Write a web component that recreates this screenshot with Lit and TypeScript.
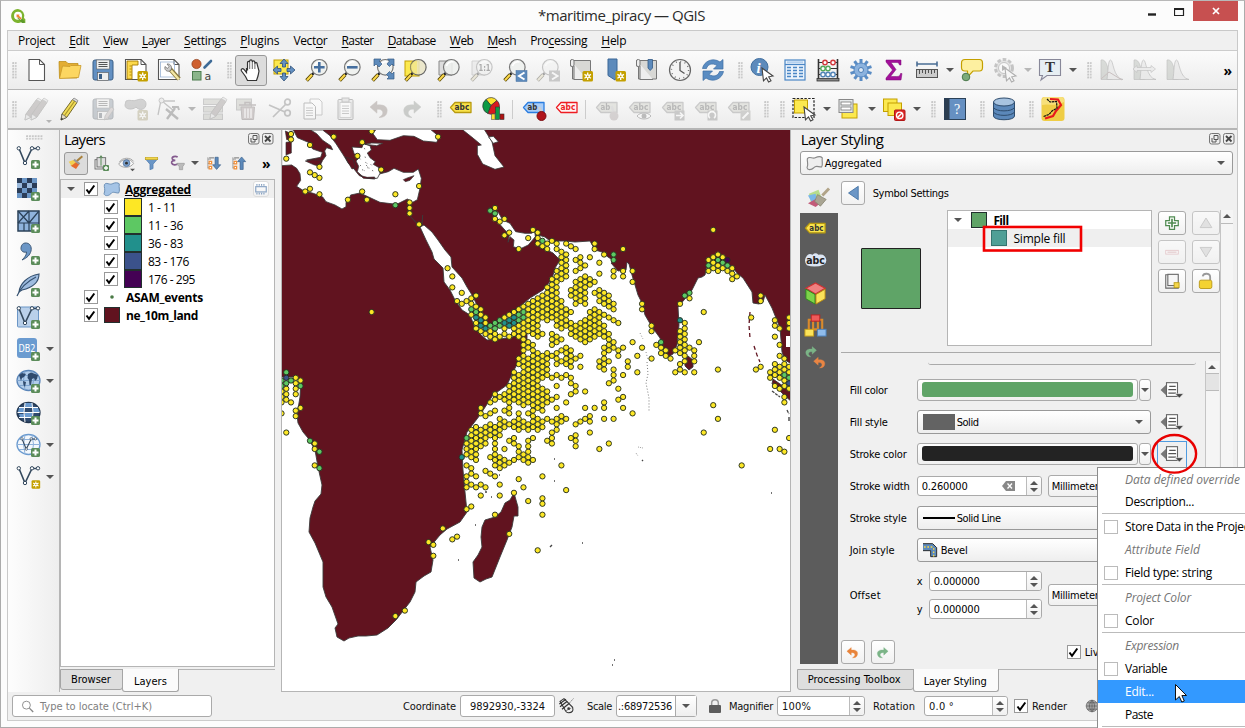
import { LitElement, html, svg, css } from "lit";
import { customElement } from "lit/decorators.js";

/* ---------- text helper: label with an expected advance width ---------- */
const t = (s: string, w = 0, cls = "") => {
  const i = s.indexOf("&");
  const body = i < 0 ? s : html`${s.slice(0, i)}<u>${s[i + 1]}</u>${s.slice(i + 2)}`;
  return html`<span class="t ${cls}" data-w=${w}>${body}</span>`;
};

/* ---------- icon parts ---------- */
const plus = svg`<rect x="15" y="15" width="9" height="9" rx="1.5" fill="#5b8c5a"/><path d="M19.5 16.5v6M16.5 19.5h6" stroke="#fff" stroke-width="2"/>`;
const star = svg`<rect x="13.5" y="13" width="10.5" height="10.5" rx="1.5" fill="#c4a000"/><path d="M18.7 14.5v7.5M15.4 16.4l6.6 3.8M15.4 20.2l6.6-3.8" stroke="#fff" stroke-width="1.3"/><circle cx="18.7" cy="18.3" r="2" fill="#fff"/><circle cx="18.7" cy="18.3" r=".9" fill="#c4a000"/>`;
const handle = svg`<path d="M8.6 15.2L6.6 17.2" stroke="#222" stroke-width="2.6"/><path d="M7 16.8L1.6 22.6" stroke="#554400" stroke-width="3.6"/><path d="M7 16.8L2 22.2" stroke="#fcd94c" stroke-width="2"/>`;
const lens = svg`<circle cx="14.3" cy="9.3" r="7.8" fill="#eef0ee" fill-opacity=".88" stroke="#777" stroke-width="1.2"/><path d="M9.5 8a5.5 5.5 0 0 1 7-4" stroke="#fff" stroke-width="1.6" fill="none"/>`;
const tag = (f: string, s: string, c: string, txt = "abc") => svg`<path d="M1.5 10.5L6 5.5H22V15.500H6Z" fill="${f}" stroke="${s}" stroke-width="1.3" stroke-linejoin="round"/><text x="5.600" y="13.400" font-size="8.500" font-weight="700" fill="${c}" textLength="${txt.length * 4.900}" lengthAdjust="spacingAndGlyphs">${txt}</text>`;
const vee = svg`<path d="M3 3.500L9 18L16 3.500H22" fill="none" stroke="#34495e" stroke-width="1.600"/><g fill="#fff" stroke="#34495e" stroke-width="1"><circle cx="2.800" cy="3.300" r="1.700"/><circle cx="9" cy="18" r="1.700"/><circle cx="16" cy="3.300" r="1.700"/><circle cx="22" cy="3.300" r="1.700"/></g>`;
const pencil = svg`<path d="M4 17L14.500 2.500L19 5.500L8.800 20.300L3 23Z" fill="#f2dc57" stroke="#75692a" stroke-width="1"/><path d="M14.500 2.500L16 1L20 3.600L19 5.500Z" fill="#ddd" stroke="#888" stroke-width=".8"/><path d="M6.500 18.500L16.700 4" stroke="#a8952a" stroke-width="1.200"/><path d="M4 17L8.800 20.300L3 23Z" fill="#e9e0c5" stroke="#555" stroke-width=".7"/><path d="M3 23L3.600 20.500L5 21.900Z" fill="#222"/>`;
const gpencil = svg`<path d="M4 17L14.500 2.500L19 5.500L8.800 20.300L3 23Z" fill="#a08580" stroke="#776" stroke-width="1"/><path d="M14.500 2.500L16 1L20 3.600L19 5.500Z" fill="#ddd" stroke="#888" stroke-width=".8"/><path d="M4 17L8.800 20.300L3 23Z" fill="#ddd" stroke="#777" stroke-width=".7"/>`;
const floppy = svg`<rect x="2" y="2" width="20" height="20" rx="2" fill="#6390c2" stroke="#3b5f86"/><rect x="5.500" y="2" width="13" height="9" fill="#eee" stroke="#666" stroke-width=".6"/><path d="M7.500 4.500h9M7.500 6.500h9M7.500 8.500h9" stroke="#555" stroke-width="1"/><rect x="6.500" y="14.500" width="11" height="8" fill="#eee" stroke="#555" stroke-width=".6"/><rect x="8" y="16" width="3" height="5" fill="#3b5f86"/>`;
const sheet = svg`<path d="M1.500 1.500H17L22 6.500V21.500H1.500Z" fill="#fff" stroke="#555" stroke-width="1.100"/><path d="M17 1.500V6.500H22" fill="none" stroke="#555"/>`;
const cursor = svg`<path d="M12 10L23 18L18.700 18.800L21 22.800L18.600 24L16.500 19.900L13.500 22.800Z" fill="#fff" stroke="#444" stroke-width="1.100"/>`;
const scroll = svg`<path d="M5 2.500H21.500V21H3.500V4" fill="#d8d8d5" stroke="#777"/><path d="M1.500 2V8H5V21.500H18" fill="#eee" stroke="#777"/><rect x="1.500" y="1.500" width="3.500" height="7" rx="1.500" fill="#eee" stroke="#777"/>`;
const hist = svg`<path d="M2 21.500V2C6 1 8 6 9 11C10 17 12 20.500 13 21.500Z" fill="#9db694" stroke="#666" stroke-width=".6"/><path d="M8 21.500C9 15 9 2 11.500 2C14.500 2 14 20 24 21.500Z" fill="#ddd" stroke="#666" stroke-width=".7"/>`;
const undo = (c: string) => svg`<path d="M3 10L10 4V8C18 7 21 11 20 15C19.500 19 16 20.500 12 20.500C15 18.500 16.500 17 15.500 14.500C14.600 12.500 12.500 12 10 12.300V16.200Z" fill="${c}" stroke="${c}" stroke-width=".5"/>`;
const abacusBeads = (y: number, c: string, xs: number[]) => svg`${xs.map(x => svg`<circle cx="${x}" cy="${y}" r="2.200" fill="#fff" stroke="${c}" stroke-width="1.400"/>`)}`;

const I: Record<string, any> = {
  new: svg`<path d="M4 1.500H14.500L19.500 6.500V22.500H4Z" fill="#fff" stroke="#555" stroke-width="1.100"/><path d="M14.500 1.500V6.500H19.500" fill="none" stroke="#555"/>`,
  open: svg`<path d="M1 3.500H8L10 5.500H20V9L19 20H1.500Z" fill="#e3ad33" stroke="#b8860b" stroke-width=".7"/><path d="M1.500 20.500L4.500 8L12 8.500L13 7.500H23L20.500 19.500Z" fill="#fcd661" stroke="#c9992a" stroke-width=".8"/>`,
  save: floppy,
  layout: svg`${sheet}<path d="M3 3H14V7H8V21H3Z" fill="#fcd94c" stroke="#a67c00" stroke-width=".9"/><path d="M5.500 8h2M5.500 11h2M5.500 14h2M5.500 17h2" stroke="#a67c00" stroke-width=".8"/>${star}`,
  manager: svg`${sheet}<rect x="3.500" y="4" width="14" height="15" fill="none" stroke="#9bb4d4" stroke-width=".8"/><path d="M13 11L22 21" stroke="#8a7a40" stroke-width="4.500"/><path d="M14 12.500L22 21.500" stroke="#f3e7a4" stroke-width="2.400"/><path d="M8 8.500C7 12 10 14 13 13L14.500 11C15 8 13 5.500 10 6L12 8.500L10.500 10.500Z" fill="#ccc" stroke="#666" stroke-width=".7"/>`,
  styles: svg`<circle cx="6.500" cy="6" r="4.600" fill="#cf6030" stroke="#8c3b18" stroke-width=".7"/><path d="M14.500 9.500L21 3" stroke="#3e6b97" stroke-width="2.600" stroke-linecap="round"/><rect x="2.500" y="13.500" width="8.500" height="8.500" fill="#8ab58a" stroke="#4c7d4e"/><text x="14.500" y="21.500" font-size="11" fill="#444">a</text>`,
  hand: svg`<path d="M8.500 12.500V4.500C8.500 3 10.500 3 10.600 4.500V3C11 1.300 13 1.500 13.200 3V4C13.600 2.300 15.600 2.500 15.800 4V5.500C16.400 4 18.300 4.500 18.200 6.500L20 13L19 18L17.500 22.500H8.500L6.500 18.500L2.500 13C1.500 11.300 3.500 10 4.800 11.200L7.500 14.500L7.500 10" fill="#fff" stroke="#333" stroke-width="1.200"/><path d="M10.700 4.500V11M13.300 4V11M15.900 5V11" stroke="#444" stroke-width=".8"/>`,
  panto: svg`<rect x="2" y="2" width="14" height="14" fill="#fce94f" stroke="#c4a000"/><g fill="#6390c2" stroke="#2f5178" stroke-width=".8"><path d="M12 1L16 5.500H13.500V9H10.500V5.500H8Z"/><path d="M12 23L16 18.500H13.500V15H10.500V18.500H8Z"/><path d="M1 12L5.500 8V10.500H9V13.500H5.500V16Z"/><path d="M23 12L18.500 8V10.500H15V13.500H18.500V16Z"/></g>`,
  zin: svg`${handle}${lens}<path d="M14.300 4V14.600M9 9.300H19.600" stroke="#456f9f" stroke-width="2.600"/>`,
  zout: svg`${handle}${lens}<path d="M9 9.300H19.600" stroke="#456f9f" stroke-width="2.600"/>`,
  zfull: svg`${handle}${lens}<g fill="#5d8abb" stroke="#345a85" stroke-width=".7"><path d="M3 1H10L8 3L11 6L8 9L5 6L3 8Z"/><path d="M23 1V8L21 6L18.500 8.500L16 6L18.500 3L16.500 1Z"/><path d="M23 21H16L18 19L15.500 16.500L18.500 13.500L21 16L23 14Z"/></g>`,
  zsel: svg`<rect x="1" y="3" width="14" height="15" fill="#fce94f" stroke="#c4a000"/>${handle}<circle cx="14.300" cy="9.300" r="7.800" fill="#e9e4c4" fill-opacity=".85" stroke="#666" stroke-width="1.200"/><path d="M13 2.500a6.500 6.500 0 0 0 0 13.500z" fill="#fce94f" opacity=".45"/>`,
  zlay: svg`<path d="M2 3H15V17H2Z" fill="#ddd" stroke="#888"/>${handle}${lens}`,
  z11: svg`<path d="M2 3H15V17H2Z" fill="#ddd" stroke="#999"/>${handle}${lens}<text x="8.500" y="12.500" font-size="8.500" font-weight="700" fill="#333" textLength="12" lengthAdjust="spacingAndGlyphs">1:1</text>`,
  zlast: svg`${handle}${lens}<rect x="13" y="12.500" width="11" height="11" fill="#5d8abb" stroke="#456f9f" stroke-width=".5"/><path d="M21.500 14.500L16 18L21.500 21.500" fill="none" stroke="#fff" stroke-width="2"/>`,
  znext: svg`${handle}${lens}<rect x="13" y="12.500" width="11" height="11" fill="#888"/><path d="M16 14.500L21.500 18L16 21.500" fill="none" stroke="#fff" stroke-width="2"/>`,
  newmap: svg`${scroll}${star}`,
  bmnew: svg`<path d="M6 1H15V18L13 22L6 17.500Z" fill="#5d8abb" stroke="#3b6797"/>${star}`,
  bm: svg`${scroll}<path d="M13 1.500H17.500V10L15.200 12.500L13 10Z" fill="#5d8abb" stroke="#345a85" stroke-width=".8"/>`,
  clock: svg`<circle cx="12" cy="12" r="10.500" fill="#f3f3f3" stroke="#666" stroke-width="1.200"/><circle cx="12" cy="12" r="8.600" fill="none" stroke="#777" stroke-width="1.500" stroke-dasharray="1 3.500"/><path d="M12 4V12.500L16.500 15.500" fill="none" stroke="#555" stroke-width="1.300"/>`,
  refresh: svg`<path d="M1.500 10.500C3 3 12 -1 19 4L22 1.500V11H12.500L16 7.500C11 4.500 6.500 6.500 5.500 10.500Z" fill="#5a8cc2" stroke="#3d6ea5" stroke-width=".7"/><path d="M22.500 13.500C21 21 12 25 5 20L2 22.500V13H11.500L8 16.500C13 19.500 17.500 17.500 18.500 13.500Z" fill="#5a8cc2" stroke="#3d6ea5" stroke-width=".7"/>`,
  ident: svg`<circle cx="9.500" cy="9" r="8.500" fill="#5d8abb" stroke="#416f9f"/><text x="6.600" y="14.500" font-size="15" font-style="italic" font-weight="700" fill="#fff" style="font-family:'Liberation Serif'">i</text>${cursor}`,
  table: svg`<rect x="2" y="2" width="20" height="20" fill="#eaf2fb" stroke="#4a86c5" stroke-width="1.200"/><path d="M2 6.500H22" stroke="#4a86c5" stroke-width="1.200"/><path d="M4 9.500h4M10 9.500h4M16 9.500h4M4 12.500h4M10 12.500h4M16 12.500h4M4 15.500h4M10 15.500h4M16 15.500h4M4 18.500h4M10 18.500h4M16 18.500h4" stroke="#4a86c5" stroke-width="1.300"/><path d="M4 4.300h16" stroke="#b5d1ef" stroke-width="2"/>`,
  abacus: svg`<path d="M2.500 1V22M21.500 1V22" stroke="#333" stroke-width="1.600"/><path d="M2.500 4.500H21.500M2.500 10.500H21.500M2.500 16.500H21.500" stroke="#333" stroke-width="1"/><rect x="1" y="20.500" width="22" height="2.500" fill="#888" stroke="#333" stroke-width=".8"/>${abacusBeads(4.500, "#d2393c", [9, 17])}${abacusBeads(10.500, "#56a95b", [7, 12])}${abacusBeads(16.500, "#5486b8", [7, 12, 17])}`,
  gear: svg`<g stroke="#5a8cc4" stroke-width="3">${[0, 36, 72, 108, 144].map(a => svg`<path d="M12 1V23" transform="rotate(${a} 12 12)"/>`)}</g><circle cx="12" cy="12" r="7" fill="#8bb2de" stroke="#5a8cc4"/><circle cx="12" cy="12" r="2.500" fill="#dbe8f6" stroke="#4c7eb6"/>`,
  sigma: svg`<path d="M4 2H19V7H17.500C17 4.800 16 4.500 14 4.500H9L14 11.500L8.500 18.500H14.500C17 18.500 18 18 18.500 15.500H20L19 22H4V20L10.500 12L4 4Z" fill="#a3109a" stroke="#7a0b75" stroke-width=".5"/>`,
  ruler: svg`<path d="M2 6H22M2 3.500V8.500M22 3.500V8.500" stroke="#4a6d94" stroke-width="1.600"/><rect x="1.500" y="11.500" width="21" height="8" fill="#ccc" stroke="#555"/><path d="M4.500 12v4M7.500 12v3M10.500 12v4M13.500 12v3M16.500 12v4M19.500 12v3" stroke="#444" stroke-width=".9"/>`,
  tip: svg`<path d="M5 1.500H19.500C22 1.500 22.500 3 22.500 5V9.500C22.500 12 21.500 13 19.500 13H13L7.500 19V13H5C3 13 1.500 12 1.500 9.500V5C1.500 3 2.500 1.500 5 1.500Z" fill="#fdf0a0" stroke="#c4a000" stroke-width="1.200"/><circle cx="6" cy="19" r="3.800" fill="#7cab7a" stroke="#4a784b"/>`,
  action: svg`<circle cx="11" cy="10" r="8.500" fill="#ccc" stroke="#777" stroke-width="3" stroke-dasharray="3.500 2"/><circle cx="11" cy="10" r="5.500" fill="#fff" stroke="#777"/><path d="M9 7L14 10L9 13Z" fill="#555"/>${cursor}`,
  text: svg`<path d="M1.500 1.500H22.500V17.500H9L3 22L4.500 17.500H1.500Z" fill="#e7eff3" stroke="#889" stroke-width="1.100"/><text x="7" y="14.300" font-size="15" fill="#333" font-weight="700" style="font-family:'Liberation Serif'">T</text>`,
  hist1: svg`${hist}<path d="M2 21L10 14L23 22" fill="none" stroke="#c06060"/>`,
  hist2: svg`${hist}<path d="M1 11L5 7.500V9.500H19V7.500L23.500 11L19 14.500V12.500H5V14.500Z" fill="#ddd" stroke="#777" stroke-width=".7"/>`,
  hist3: hist,
  pencils: svg`<g transform="translate(-3,0)">${gpencil}</g><g transform="translate(3,0)">${gpencil}</g>`,
  pencil, savee: svg`${floppy}<path d="M14 19L20 10L23 12L17 21L13.500 23Z" fill="#caa" stroke="#777" stroke-width=".8"/>`,
  poly: svg`<path d="M2 4C6 2 9 5 13 3C18 1 22 3 22 7C22 13 15 14 12 10C9 13 1 13 1 8Z" fill="#999" stroke="#777"/>${star}`,
  vertex: svg`<path d="M4 3L1 18M5 4L18 4M5 4L17 14" stroke="#777" stroke-width="1.300"/><circle cx="4.500" cy="3.500" r="2.500" fill="#ddd" stroke="#777"/><path d="M10 22L18 11M9 12L21 22" stroke="#666" stroke-width="2.400"/><path d="M15 10h6l1 3" stroke="#666" stroke-width="2" fill="none"/>`,
  multi: svg`<rect x="1.500" y="2" width="19" height="5.500" fill="#b9bd9f" stroke="#888"/><rect x="1.500" y="9.500" width="19" height="5.500" fill="#b9bd9f" stroke="#888"/><rect x="1.500" y="17" width="19" height="5.500" fill="#b9bd9f" stroke="#888"/><g transform="translate(5,-1)">${gpencil}</g>`,
  trash: svg`<rect x="1.500" y="2" width="15" height="11" fill="#b9bd9f" stroke="#888"/><path d="M4 8H21M10 8V5.500H15V8" fill="none" stroke="#866" stroke-width="1.500"/><path d="M6 10H19.500L18.500 22.500H7Z" fill="#b88" stroke="#866"/><path d="M10 11.500V21M13 11.500V21M16 11.500V21" stroke="#fff" stroke-width="1.200"/>`,
  cut: svg`<path d="M1 8L17 15M5 20L18 7" stroke="#777" stroke-width="1.700"/><circle cx="19.500" cy="5" r="2.800" fill="none" stroke="#777" stroke-width="1.700"/><circle cx="19.500" cy="16" r="2.800" fill="none" stroke="#777" stroke-width="1.700"/>`,
  copy: svg`<path d="M9 2H18L21 5V18H9Z" fill="#fff" stroke="#888"/><path d="M3 6H11L14.500 9.500V22H3Z" fill="#fff" stroke="#666"/><path d="M5 11h7M5 13.500h7M5 16h7M5 18.500h7" stroke="#888"/>`,
  paste: svg`<rect x="4" y="2.500" width="15" height="20" rx="1" fill="#ddd" stroke="#666"/><rect x="6" y="5.500" width="11" height="15" fill="#fff" stroke="#888" stroke-width=".7"/><rect x="8" y="1" width="7" height="4" fill="#ccc" stroke="#777"/><path d="M8 9h7M8 11.500h7M8 14h7M8 16.500h7" stroke="#888"/>`,
  undo: undo("#a5745c"), redo: svg`<g transform="matrix(-1 0 0 1 24 0)">${undo("#7f917b")}</g>`,
  lab: tag("#fae34b", "#b89a10", "#333"),
  chart: svg`<path d="M9 8.500L4 2.500A7.500 7.500 0 0 1 15 3.500Z" fill="#fce22f" stroke="#333" stroke-width=".7"/><path d="M9 8.500L4 2.500A8 8 0 0 0 6 16.500Z" fill="#0c9a45" stroke="#333" stroke-width=".7"/><path d="M9 8.500L15 3.500A8 8 0 0 1 6 16.500Z" fill="#d8181f" stroke="#333" stroke-width=".7"/><rect x="9.500" y="17" width="3.500" height="5.500" fill="#fce22f" stroke="#555" stroke-width=".6"/><rect x="13.500" y="10" width="4" height="12.500" fill="#0c9a45" stroke="#333" stroke-width=".6"/><rect x="18" y="17" width="4" height="5.500" fill="#b01212" stroke="#333" stroke-width=".6"/>`,
  labpin: svg`${tag("#a9cdf8", "#2a7de0", "#333", "ab")}<path d="M17 10L20 16" stroke="#ccc" stroke-width="2.500"/><circle cx="19.500" cy="19" r="4.500" fill="#b0141c" stroke="#7d0d13"/>`,
  labred: tag("#fff5f5", "#ee1c22", "#ee1c22"),
  g1: svg`${tag("#c9cba4", "#888", "#555", "ab")}<path d="M16.500 9L19 16" stroke="#bbb" stroke-width="2.500"/><circle cx="19" cy="19" r="4.500" fill="#b99"/>`,
  g2: svg`${tag("#c9cba4", "#888", "#555")}<path d="M9 19C12 15 20 15 23 19C20 23 12 23 9 19Z" fill="#fff" stroke="#666"/><circle cx="16" cy="19" r="2.500" fill="#666"/>`,
  g3: svg`${tag("#c9cba4", "#888", "#555")}<rect x="13.500" y="13.500" width="10" height="10" fill="#888"/><path d="M15 18.500h7M19 15.500l3 3l-3 3" stroke="#fff" stroke-width="1.600" fill="none"/>`,
  g4: svg`${tag("#c9cba4", "#888", "#555")}<rect x="13.500" y="13.500" width="10" height="10" fill="#888"/><path d="M16 21a3.500 3.500 0 1 1 4 0" stroke="#fff" stroke-width="1.600" fill="none"/>`,
  g5: svg`${tag("#c9cba4", "#888", "#555")}<rect x="13.500" y="13.500" width="10" height="10" fill="#998"/><path d="M15.500 21.500L21.500 15.500" stroke="#fff" stroke-width="2"/>`,
  select: svg`<rect x="1" y="1.500" width="21" height="19" fill="none" stroke="#222" stroke-width="1.200" stroke-dasharray="2.400 1.400"/><rect x="2.500" y="3" width="13" height="13" fill="#fce94f" stroke="#c4a000"/>${cursor}`,
  form: svg`<rect x="5" y="7" width="15" height="14" fill="#fce94f" stroke="#c4a000"/><rect x="2" y="2.500" width="14" height="13" fill="#e6e9ea" stroke="#888"/><rect x="4" y="5" width="10" height="3" fill="#fff" stroke="#777" stroke-width=".8"/><rect x="4" y="10" width="10" height="3" fill="#fff" stroke="#777" stroke-width=".8"/>`,
  desel: svg`<rect x="1.500" y="2" width="13.500" height="12.500" fill="#fce94f" stroke="#c4a000"/><rect x="6" y="6" width="13.500" height="12.500" fill="#fce94f" stroke="#c4a000"/><rect x="12.500" y="13" width="10.500" height="10.500" rx="1" fill="#e02a2a" stroke="#b01515"/><circle cx="17.700" cy="18.300" r="3.200" fill="none" stroke="#fff" stroke-width="1.400"/><path d="M15.500 20.500L20 16" stroke="#fff" stroke-width="1.400"/>`,
  help: svg`<rect x="1.500" y="1.500" width="21" height="21" fill="#6690c2" stroke="#2b4158"/><rect x="1.500" y="1.500" width="5" height="21" fill="#2b3d50"/><text x="11" y="16.500" font-size="14" fill="#fff" style="font-family:'Liberation Serif'">?</text>`,
  db: svg`<path d="M1.500 5V19C1.500 24 22.500 24 22.500 19V5" fill="#5b88ba" stroke="#2e4c6d"/><ellipse cx="12" cy="5" rx="10.500" ry="4" fill="#a7c3e0" stroke="#2e4c6d"/><path d="M1.500 10.500C4 15 20 15 22.500 10.500M1.500 15C4 19.500 20 19.500 22.500 15" fill="none" stroke="#2e4c6d"/>`,
  grass: svg`<rect x=".5" y="0" width="23" height="24" rx="3" fill="#efcd45"/><path d="M1 8C8 6 14 10 23 5V3Q23 0 20 0H4Q1 0 1 4Z" fill="#f7e07a"/><path d="M9 2L17 2.500L20 8L15 14L12 19L4 21.500" fill="none" stroke="#e8191c" stroke-width="2.200"/><path d="M6 2L9 5L15.500 4.500L16 11L11 14L8 17.500L2.500 19.500" fill="none" stroke="#111" stroke-width="1.200" stroke-dasharray="2.500 .6"/>`,
  /* left column */
  addv: svg`${vee}${plus}`, newv: svg`${vee}<g transform="translate(4.500,4.500) scale(.82)">${star}</g>`,
  raster: svg`<rect x="1" y="1" width="20" height="20" fill="#6b96c6"/><path d="M1 1h5v5H1zM11 1h5v5h-5zM6 6h5v5H6zM16 6h5v5h-5zM1 11h5v5H1zM11 11h5v5h-5zM6 16h5v5H6z" fill="#2b3d58"/><path d="M11 6h5v5h-5zM1 6h5v5H1z" fill="#9ab9dc"/>${plus}`,
  mesh: svg`<rect x="2" y="2" width="21" height="20" fill="#8fb3dc" stroke="#2b4158" stroke-width="1.500"/><path d="M2 14H23M13 2V22M2 2L13 14M13 2L2 14M13 14L23 2M8 14V22" stroke="#2b4158" stroke-width="1.200" fill="none"/>${plus}`,
  comma: svg`<path d="M9 2C14 1.500 16 6 15 10C14 14 11 17 6 19C9 16 10.500 14 10.500 11C7 12 4.500 9.500 5 6.500C5.300 4 7 2.200 9 2Z" fill="#6b96c6" stroke="#34506f" stroke-width=".9"/>${plus}`,
  feather: svg`<path d="M3 19C4 11 11 3 23 1C23 7 19 14 6 17Z" fill="#9dbbdf" stroke="#34506f" stroke-width="1.100"/><path d="M1 23C4 16 10 9 20 4" fill="none" stroke="#34506f" stroke-width="1.200"/>${plus}`,
  vbox: svg`<rect x="1.500" y="2" width="21" height="20" rx="1" fill="#b9d0ea" stroke="#6b96c6"/>${vee}${plus}`,
  db2: svg`<rect x="1" y="1" width="20" height="20" rx="3" fill="#6b9bd0"/><text x="2.400" y="15" font-size="11" fill="#fff" textLength="17" lengthAdjust="spacingAndGlyphs">DB2</text>${plus}`,
  globe1: svg`<ellipse cx="12.500" cy="11.500" rx="11.500" ry="10" fill="#b2cdea" stroke="#5a85b8" stroke-width="1.300"/><path d="M9 2Q6 11 9 21M16 2Q19 11 16 21M1.500 11.500H23.500M3 6.500H22M3 16.500H22" stroke="#7fa5d0" stroke-width="1" fill="none"/><path d="M3 6L6 4L10 5L8 8L6 9L5 12L4 9ZM7 12L10 13L9 18L7.500 16ZM12 5L15 3.500L22 6L21 10L19 12L18 9L16 10L15 16L13.500 16L13 11L11.500 9Z" fill="#2f4a6d"/>${plus}`,
  globe2: svg`<ellipse cx="12.500" cy="11.500" rx="11.500" ry="10" fill="#2f4a6d" stroke="#22364f" stroke-width="1.300"/><path d="M3 7H8V11H2ZM9 2H16V6H9ZM9 12H16V16H9ZM17 7H22L24 11H17ZM3 13H8V16H4Z" fill="#6b9bd0"/><path d="M9 2Q7 11 9 21M16 2Q18 11 16 21M1.500 11.500H23.500M3 6.500H22M3 16.500H22" stroke="#fff" stroke-width="1" fill="none"/>${plus}`,
  globe3: svg`<ellipse cx="12.500" cy="11.500" rx="11.500" ry="10" fill="#f4f8fc" stroke="#6b9bd0" stroke-width="1.300"/><path d="M9 2Q6 11 9 21M16 2Q19 11 16 21M1.500 11.500H23.500M3 6.500H22M3 16.500H22" stroke="#8fb3dc" stroke-width="1" fill="none"/><g transform="translate(4 3.500) scale(.7)">${vee}</g>${plus}`,
  /* layer panel */
  style: svg`<path d="M12 10L21.500 2" stroke="#a9803a" stroke-width="3"/><path d="M8 8L17 14L12 21L4 16Z" fill="#e56b2e"/><path d="M1 10L9 7L12 11L5 16Z" fill="#f2cf52"/><path d="M9 7L17.500 13.500" stroke="#999" stroke-width="3"/>`,
  addgrp: svg`<rect x="3" y="7" width="12" height="14" fill="#eee" stroke="#666" stroke-width="1.300"/><rect x="6" y="4" width="13" height="14" fill="#ddd" stroke="#666" stroke-width="1.300"/><path d="M12 16V1.500M9.500 4.500L12 1L14.500 4.500" stroke="#5b8c5a" fill="none" stroke-width="1.500"/>${plus}`,
  eye: svg`<path d="M1 13C5 5 18 4 22 12C17 19 6 19 1 13Z" fill="#f6f6f6" stroke="#999" stroke-width="1.200"/><circle cx="12" cy="11.500" r="4.800" fill="#7ba0cc" stroke="#4c6f9b"/><circle cx="12" cy="11.500" r="2" fill="#333"/><path d="M2 10C6 3 18 3 22 9" fill="none" stroke="#999" stroke-width="1.200"/><path d="M17 19.500h7l-3.500 3.500z" fill="#555"/>`,
  filter: svg`<path d="M2 4.500L9.500 13V22L14.500 20V13L22 4.500Z" fill="#6b96c6" stroke="#4675aa"/><rect x="2" y="2" width="20" height="4" fill="#f3d64a" stroke="#b89a10" stroke-width=".8"/>`,
  eps: svg`<path d="M13 3C9 1 4 2.500 5 6C5.500 7.500 8 8 9.500 8C6 8 3.500 9.500 4 12C5 15.500 11 15.500 13.500 13" fill="none" stroke="#845a8e" stroke-width="2.600"/><path d="M12 12.500H23V14L20.500 17.500V22H15.500V17.500L12 14Z" fill="#bbb" stroke="#999"/>`,
  expand: svg`<path d="M3 2V20M3 5H8M3 19H8M3 12H8" stroke="#777" fill="none"/><path d="M5 8.500h4v4h-4zM5 16.500h4v4h-4z" fill="#fff" stroke="#f2903a" stroke-width="2"/><path d="M5 3H13" stroke="#777" stroke-width="1.600"/><path d="M14.500 2H19.500V14H23.500L17 21.500L10.500 14H14.500Z" fill="#5d8abb" stroke="#345a85"/>`,
  collapse: svg`<path d="M3 2V20M3 5H8M3 19H8M3 12H8" stroke="#777" fill="none"/><path d="M5 8.500h4v4h-4zM5 16.500h4v4h-4z" fill="#fff" stroke="#f2903a" stroke-width="2"/><path d="M5 3H13" stroke="#777" stroke-width="1.600"/><path d="M14.500 21.500H19.500V9H23.500L17 1.500L10.500 9H14.500Z" fill="#5d8abb" stroke="#345a85"/>`,
  blob: svg`<path d="M2 5C5 1 9 6 13 4C17 2 21 2 23 4C22 9 24.500 14 22 17C17 17 14 14 11 18C7 22 2 21 1.500 18C4 12 1 9 2 5Z" fill="#a5c4e6" stroke="#6b8fb5" stroke-width="1.400"/>`,
  blobg: svg`<path d="M2 5C5 1 9 6 13 4C17 2 21 2 23 4C22 9 24.500 14 22 17C17 17 14 14 11 18C7 22 2 21 1.500 18C4 12 1 9 2 5Z" fill="#eee" stroke="#888" stroke-width="1.600"/>`,
  mem: svg`<rect x="3" y="8" width="18" height="9" fill="none" stroke="#8aa4c4" stroke-width="2"/><path d="M5 3.500v3M9 3.500v3M13 3.500v3M17 3.500v3M5 18.500v3M9 18.500v3M13 18.500v3M17 18.500v3" stroke="#8aa4c4" stroke-width="2"/>`,
  /* styling tabs */
  brushbig: svg`<path d="M2 8L12 4L16 14L8 20L4 17Z" fill="#b6dd8c"/><path d="M1 10L9 8L10 16L5 17Z" fill="#79b7e8"/><path d="M1 18L10 13L14 18L9 22Z" fill="#c25b79"/><path d="M16 10L23 2.500" stroke="#b1a488" stroke-width="3"/><path d="M11 9L20 14L14 21L8 16Z" fill="#a9a593" stroke="#87836f" stroke-width=".8"/>`,
  halo: svg`<path d="M3 6Q5 3 9 5Q12 2 15 5Q20 4 22 7Q25 12 21 15Q12 19 3 16Q-1 11 3 6Z" fill="#dce5f3"/><text x="2.300" y="15" font-size="11.500" font-weight="700" fill="#222" textLength="19.500" lengthAdjust="spacingAndGlyphs">abc</text>`,
  cube: svg`<path d="M12 1L22 6.500L12 12.500L2 6.500Z" fill="#f08080" stroke="#c33" stroke-width="1.300"/><path d="M2 7.500L11.500 13V23L2 17.500Z" fill="#7dd34a" stroke="#2c8a1c"/><path d="M22 7.500L12.500 13V23L22 17.500Z" fill="#fbe35a" stroke="#b98b12"/>`,
  tree3: svg`<path d="M5 17V6H8M9.500 6V16H14.500V6M19 17V6H16" stroke="#d98a2c" stroke-width="2.200" fill="none"/><rect x="7.500" y="1" width="9" height="6.500" fill="#ee5a5a" stroke="#b22"/><rect x="1" y="16" width="9" height="7" fill="#fbe35a" stroke="#c9a21c"/><rect x="14" y="16" width="9" height="7" fill="#8fbbea" stroke="#4c82bd"/>`,
  hist4: svg`<g transform="translate(15 -2) scale(-.65 .65)">${undo("#7bb487")}</g><g transform="translate(8 9) scale(.68)">${undo("#e98543")}</g>`,
  undoO: undo("#e8833a"), redoG: svg`<g transform="matrix(-1 0 0 1 24 0)">${undo("#7bb487")}</g>`,
  back: svg`<path d="M19 3V21L6 12Z" fill="#6b96c6" stroke="#34669b"/>`,
  addb: svg`<path d="M9 4.500H15V9H19.500V15H15V19.500H9V15H4.500V9H9Z" fill="#fff" stroke="#4f8a50" stroke-width="1.500"/><path d="M12 7V17M7 12H17" stroke="#4f8a50" stroke-width="2"/>`,
  minus: svg`<rect x="4.500" y="10" width="15" height="4.500" fill="#fff" stroke="#dcaab0"/><path d="M6.500 12.200H17.500" stroke="#dcb5b9" stroke-width="1.500"/>`,
  dup: svg`<path d="M7 4.500H4.500V20.500H19.500V18" fill="none" stroke="#666" stroke-width="1.300"/><rect x="7" y="4" width="12.500" height="13.500" fill="#f6f6f6" stroke="#666" stroke-width="1.300"/><rect x="14.500" y="14" width="6" height="6" fill="#f4d64b" stroke="#b89a10"/>`,
  lock: svg`<path d="M8 6.500C9 2 17.500 2 17 8L17 11" fill="none" stroke="#999" stroke-width="2.200"/><rect x="4" y="11" width="15" height="10" rx="2" fill="#f3d232" stroke="#b3920e"/>`,
  up: svg`<path d="M12 6L19 17.500H5Z" fill="#d8d8d8" stroke="#aaa"/>`, down: svg`<path d="M12 18L19 6.500H5Z" fill="#d8d8d8" stroke="#aaa"/>`,
  dd: svg`<path d="M-.5 12L6.500 5.500V18.500Z" fill="#777"/><rect x="6" y="4" width="12" height="15" fill="#fff" stroke="#666" stroke-width="1.200"/><path d="M9 8h7M8 11.700h8.500M8 15.400h8.500" stroke="#555" stroke-width="1.400"/><path d="M15.500 16h9l-4.500 4.800z" fill="#444" stroke="#eee" stroke-width=".6"/>`,
  bevel: svg`<path d="M1.500 2.500H16L22 8.500V22H13V13H1.500Z" fill="#5d8abb"/><path d="M1.500 2.500H16L22 8.500V22H13V13H1.500" fill="none" stroke="#222" stroke-width="1.400"/><path d="M3 7.500H15.500L17.500 9.500V22" fill="none" stroke="#f7d748" stroke-width="2" stroke-dasharray="2.500 2.500"/>`,
  search: svg`<circle cx="10" cy="9.500" r="7.300" fill="none" stroke="#888" stroke-width="1.700"/><path d="M15.500 15L22.500 22" stroke="#888" stroke-width="2.600"/>`,
  mouse: svg`<path d="M3 5L9 1L22 14Q24 22 16 22Q12 22 10 17Z" fill="#eee" stroke="#333" stroke-width="1.600"/><path d="M2 9L12 2M3 13L14 5M6 17L17 8" stroke="#333" stroke-width="1.800"/><path d="M14 11L23 1" stroke="#555" stroke-width="1.500" stroke-dasharray="2 2"/><circle cx="16" cy="16" r="2" fill="#333"/><path d="M12 19L20 15" stroke="#555"/>`,
  padlock: svg`<path d="M7 11V7.500C7 1 17 1 17 7.500V11" fill="none" stroke="#999" stroke-width="2.200"/><rect x="3" y="10.500" width="18" height="12" rx="1.500" fill="#5c5c5c"/>`,
  world: svg`<circle cx="12" cy="12" r="10" fill="#aaa" stroke="#666" stroke-width="1.200"/><path d="M2 12H22M4 6.500H20M4 17.500H20M12 2V22M12 2Q3 12 12 22M12 2Q21 12 12 22" fill="none" stroke="#555" stroke-width="1.100"/>`,
  logo: svg`<path d="M12 1.500A10.500 10.500 0 1 0 19 20L22 22.500H23V17L21 15A10.500 10.500 0 0 0 12 1.500Z" fill="#7cb32e"/><circle cx="12" cy="11.800" r="6" fill="#fff"/><path d="M11 10L22 20V22.500H18L11 15Z" fill="#5d9b2a"/><path d="M9.500 9.500H14V12L18 15.500L15.500 17.500L12 14H9.500Z" fill="#ef7f2b" stroke="#fff" stroke-width=".7"/>`,
};
const ic = (n: string, size = 24) => html`<svg class="ic" width=${size} height=${size} viewBox="0 0 24 24">${I[n]}</svg>`;
const tri = html`<i class="tri"></i>`;

/* ---------- map data ---------- */
const DX = 4.744, DY = 5.478;
type Frame = [number, number];
const NW: Frame = [280, 125], NE: Frame = [530, 125], SW: Frame = [280, 360], SE: Frame = [530, 360];
const COL: Record<string, string> = { y: "#fde725", g: "#5dc863", t: "#21908c", b: "#3b528b", p: "#440154" };
const snap = (x: number, y: number): [number, number] => {
  const i = Math.round((x - 291) / DX);
  const off = Math.abs(i % 2) * DY / 2;
  return [i, Math.round((y - 134 - off) / DY)];
};
const cells = new Map<string, [number, number, string]>();
const put = (i: number, j: number, c: string) => cells.set(i + "_" + j, [i, j, c]);
const pts = (s: string) => s.trim().split(/\s+/).map(p => p.split(",").map(Number) as [number, number]);
const dots = (f: Frame, c: string, s: string) => pts(s).forEach(([x, y]) => { const [i, j] = snap(f[0] + x / 3, f[1] + y / 3); put(i, j, c); });
const inside = (P: [number, number][], x: number, y: number) => {
  let r = false;
  for (let a = 0, b = P.length - 1; a < P.length; b = a++) {
    const [xa, ya] = P[a], [xb, yb] = P[b];
    if (ya > y !== yb > y && x < ((xb - xa) * (y - ya)) / (yb - ya) + xa) r = !r;
  }
  return r;
};
const area = (f: Frame, s: string, c = "y") => {
  const P = pts(s).map(([x, y]) => [f[0] + x / 3, f[1] + y / 3] as [number, number]);
  for (let i = 0; i < 110; i++) for (let j = 0; j < 110; j++) {
    const x = 291 + i * DX, y = 134 + j * DY + (i % 2) * DY / 2;
    if (inside(P, x, y)) { if (c) put(i, j, c); else cells.delete(i + "_" + j); }
  }
};
/* Gulf of Aden */
area(NW, "575,600 625,592 665,570 700,548 735,530 780,505 780,625 745,635 700,640 625,645 590,622");
dots(NW, "g", "628,603 645,595 657,587 645,610 657,603 687,603 715,570 728,562 715,586 728,578 573,553 587,561");
dots(NW, "t", "601,603 615,610 587,577 601,586 672,594 687,586 701,578 687,594 701,594");
area(NW, "650,612 664,612 664,626 650,626", ""); area(NW, "680,612 694,612 694,626 680,626", "");
dots(NW, "y", "587,512 573,520 559,528 545,537 530,528 573,537 587,545 601,553 573,570 601,570 587,594 587,610 615,578");
/* Mediterranean, Red Sea, Persian Gulf */
dots(NW, "y", "33,27 33,43 89,60 160,35 246,51 232,93 275,19 473,35 18,117 118,126 89,142 104,150 118,158 303,134 75,199 89,191 118,208 203,224 246,199 260,224 345,208 417,183 388,232 388,249 388,265 417,298 502,430 516,454 516,487 545,504 274,561 645,249 645,282 659,290 673,282 687,323 673,331 745,339 716,372 759,315 773,323 773,340 773,356");
dots(NW, "g", "345,240 630,257 645,265");
/* Arabian Sea */
area(NE, "-5,520 25,510 40,495 60,470 75,435 90,405 100,385 115,385 112,460 80,490 100,525 125,560 115,620 90,610 60,590 30,590 45,632 -5,640");
area(NE, "112,500 135,465 185,445 200,470 178,485 172,540 130,540");
area(NE, "188,505 210,488 245,515 258,552 240,558 200,530");
area(NE, "120,592 175,583 190,550 215,550 220,595 250,632 240,660 210,640 165,655 118,640");
area(NE, "55,622 85,625 110,640 90,650 60,665");
dots(NE, "y", "108,355 122,364 137,372 193,356 193,372 222,389 179,397 208,413 150,397 137,405 150,413 165,422 137,430 150,430 208,446 250,438 250,454 279,438 279,454 308,438 308,470 279,372 8,315 22,323 22,340 22,356 37,364 51,356 66,348 51,372 80,356 80,372 94,380 336,537 336,553 364,602 364,618 379,659 393,667 393,684 408,676 408,692 422,700 450,537 478,520 464,594 464,610 464,626 450,618 450,635 450,651 464,643 436,676 450,667 464,659 464,676 478,667 450,684 464,692 493,676 493,692 493,708 464,708 521,561 507,651 550,315 564,389 536,405 550,397 578,397 550,413 564,422 550,430 564,438 536,438 578,430 592,438 607,430 607,446 621,454 607,463 692,512 692,528 664,577 735,586 735,602 749,610 735,635 749,659 749,692 763,700 777,577 777,594 777,610 236,577 250,586 265,594 222,570 179,561 308,651 336,667 322,692 364,700 293,708 279,667 265,676 265,692 250,667 250,651 236,659 236,676 222,667 222,684 222,700 208,708 236,708 8,659 8,692 22,684 37,692 51,684 66,692 80,684 51,700 108,667 122,676 94,684 108,692 122,692 150,692 137,700 122,708 94,708 108,708 80,708 8,710 51,716");
dots(NE, "g", "37,348 250,389 250,405 478,504 464,512 393,651 564,405 578,413 536,422 592,422");
dots(NE, "t", "450,586"); dots(NE, "p", "592,405");
/* Somali basin */
area(NW, "722,632 765,650 770,690 740,680 720,720 700,725 705,700 730,680");
area(SW, "705,10 715,-10 790,-20 790,20 760,20 750,45 775,60 790,90 790,155 775,135 735,142 690,128 640,125 628,135 640,100 665,95 678,82 690,60 700,35 715,40 722,30");
area(SW, "560,215 585,185 600,195 640,190 665,178 690,190 720,170 755,180 790,178 790,215 745,210 715,218 690,208 660,215 620,240 625,260 600,275 590,305 560,300 540,262 560,250");
area(SW, "640,240 655,245 655,275 670,290 700,295 715,272 745,270 765,300 745,312 715,300 690,312 680,335 640,318 622,295 640,285");
dots(SW, "y", "602,144 602,160 616,168 630,152 645,160 645,144 630,168 659,177 673,152 687,160 687,144 716,160 745,160 759,152 559,316 573,324 573,340 587,349 559,349 559,365 559,382 573,374 587,382 602,374 616,382 616,332 630,341 645,349 659,374 602,407 659,407 716,357 730,382 702,399 745,423 573,440 559,448 488,506 445,547 460,555 460,588 516,538 531,530 687,522 645,464 773,571 374,752 345,769 645,217 645,234 659,225 702,234 702,250 716,259 745,243 759,234 745,259 687,242 673,267 18,234 18,103 47,54 47,70 47,86 47,103 61,62 32,127 18,120 18,136 4,95 4,111 4,127 4,160 61,144 47,152 47,168 104,250 104,267 104,316");
dots(SW, "g", "18,54 32,62 18,87 61,78 4,62 4,78 89,242 118,275 118,325 559,234"); dots(SW, "b", "18,70"); dots(SW, "t", "545,292");
area(SE, "-5,30 20,25 50,8 58,20 55,55 20,70 -5,55"); area(SE, "-5,90 25,112 50,90 65,105 85,112 60,128 35,158 -5,165");
dots(SE, "y", "80,12 94,4 108,12 122,4 122,20 150,20 137,-4 208,4 208,20 222,12 222,28 251,28 251,45 251,61 236,70 279,45 265,86 279,111 265,119 279,144 308,160 322,37 293,20 293,4 165,94 137,94 122,102 137,78 122,70 122,53 108,45 94,53 80,45 66,53 80,78 108,127 80,144 165,144 193,144 222,127 222,144 222,177 251,177 179,168 179,185 165,177 150,185 137,193 108,177 94,168 94,185 80,177 66,185 51,177 80,193 80,210 66,217 66,234 66,250 51,242 8,168 8,185 22,177 8,201 22,210 37,201 8,234 179,217 137,226 137,242 122,234 137,259 236,251 208,267 8,300 94,316 37,349 108,390 37,415 37,431 37,464 22,571 0,423 564,29 550,135 564,177 521,217 635,317 678,29 692,20 735,210 777,234 720,267 749,267 763,275 735,12 749,20 763,12 735,28 720,37 720,53 749,37 763,28 735,45 777,20 777,37 735,78 749,86 763,78 763,61 749,53 763,111 763,127 777,86 450,12 464,4 450,28 436,37 464,37 493,37 493,4");
dots(SE, "g", "763,45 777,53"); dots(SE, "b", "777,70");

const mapView = () => svg`
  <rect x="282" y="130" width="509" height="562" fill="#fff"/>
  <g fill="#61131f" stroke="#3a3a3a" stroke-width=".9" stroke-linejoin="round">
    <path d="M280 128H795V366L785 360L782 352L780 328L772 308L765 295L763 302L759 304L753 303L752 292L743 278L738 274L730 265H707L705 275L702 277L698 278L692 290L688 295L684 300L678 307L679 325L677 345L673 354L668 357L664 350L660 338L652 327L645 315L642 303L638 295L632 275L629 264L627 262L626 270L618 271L611 263L614 261L608 257L602 252L595 250L590 241L575 242L565 241L550 241L545 237L538 235L540 239L537 242L545 249L553 253L560 260L555 268L552 279L543 290L530 298L513 312L500 320L487 327L480 323L478 307L472 295L467 287L462 278L452 267L451 257L445 250L438 240L432 232L424 225L420 227L426 240L432 252L434 259L443 268L444 282L450 290L455 300L462 310L470 315L475 328L480 334L487 340L500 339L513 337L527 332L527 340L522 355L513 372L507 385L493 395L480 415L467 432L462 450L463 470L465 492L467 512L460 522L447 529L440 535L430 547L433 560L431 572L424 576L416 582L415 592L410 602L403 611L396 620L388 628L377 635L366 636L358 636L349 638L344 641L337 637L335 628L338 624L332 607L326 597L323 587V562L315 543L309 532L310 518L313 507L315 501L321 494L322 485L318 467L315 450L308 438L303 432L298 423L297 415L300 397L301 380L295 377L280 377Z"/>
    <path d="M514 493L516 500L518 507V516L514 516L512 527L507 540L500 557L492 577L486 579L480 582L474 578L473 562L478 555L482 547L481 537L482 527L485 520L495 517L501 512L505 503L510 500Z"/>
    <path d="M688 356L693 360L693 367L689 370L685 366L685 360Z"/>
    <path d="M773 379L780 384L786 388L792 393V402L785 396L778 389L772 384Z"/>
  </g>
  <g transform="translate(280 125) scale(.33333)" fill="#fff" stroke="#3a3a3a" stroke-width="2.500" stroke-linejoin="round">
    <path d="M5 12L40 15L52 38L85 52L98 72L127 82L122 97L80 105L96 112L120 122L128 106L138 92L134 78L140 68L158 74L152 62L128 46L110 26L92 15H128L150 32L168 56L190 90L205 115L222 132L238 152L262 160L285 162L295 148L325 140L342 130L370 142L400 142L415 132L424 160L420 190L412 224L398 232L382 222L350 238L300 232L266 216L240 204L212 210L206 225L198 232L198 245L186 252L165 240L138 230L128 216L100 205L72 198L50 184L62 166L60 146L50 130L35 120L5 122Z"/>
    <path d="M216 66L246 68L250 56L270 62L274 75L262 84L270 98L286 110L280 118L297 128L300 145L292 160L252 158L232 140L236 124L228 108L236 100L222 85Z"/>
    <path d="M255 58L275 54L308 55L290 62Z"/>
    <path d="M278 25L290 12H450L478 35L470 52L430 48L402 34L370 32L330 46L292 44Z"/>
    <path d="M545 12H612L636 50L645 92L672 126L645 133L608 117L592 88L592 62L604 60L580 40Z"/><path d="M626 36L640 34L655 50L640 55Z"/>
    <path d="M628 248L655 262L668 285L690 295L707 320L735 325L755 325L764 318L766 335L745 360L720 372L700 365L702 345L690 335L684 352L688 330L672 312L648 285L640 270Z"/>
    <path d="M385 268L420 305M428 270L426 300" fill="none" stroke-width="3"/>
  </g>
  <g transform="translate(280 125) scale(.33333)" fill="#61131f" stroke="#333" stroke-width="2">
    <path d="M18 52L34 50L34 84L18 90Z"/><path d="M16 18L30 24L34 44L20 44Z"/><path d="M76 108L98 104L124 106L116 124L98 118Z"/>
    <path d="M370 164L384 158L402 152L390 166L376 170Z"/><path d="M242 152L262 157L284 156L282 161L250 160Z"/>
    <path d="M196 96L220 104L226 128L216 132L204 112Z"/><path d="M226 92l8 3M238 100l6 4M256 112l7 4M240 120l5 5M252 70l5 3M254 96l6 2M262 128l8 2M272 118l4 4M258 120l6 6M246 134l8 3M276 136l6 3" fill="none" stroke-dasharray="4 3"/>
  </g>
  <g stroke="#444" fill="none" stroke-width="1">
    <path d="M647 362L648 374L646 383L649 398L649 412" stroke-dasharray="1 2" opacity=".7"/><path d="M640 333l3 6M646 352l2 8" stroke-dasharray="1 2" opacity=".6"/>
    <path d="M750 312L749 325L750 338M754 346L757 355L760 362" stroke-width="1.300" stroke="#61131f" stroke-dasharray="4 3"/>
    <path d="M772 391l8 6M787 410l2 4" stroke-width="1.300" stroke-dasharray="3 1"/><path d="M788 336V347" stroke="#fff" stroke-width="4"/>
    <path d="M642 460l1 1M550 547l2-2M582 543h1M614 660h1M612 665h1M771 493h1M554 459h1M554 481h1M475 525h1M458 560h1M485 492h2M491 497h1M499 475h1M789 417v4" stroke-width="1.400"/>
    <path d="M638 447l5 1M636 453l2 3" stroke-dasharray="1 1" opacity=".5"/>
  </g>
  <g stroke="#26301f" stroke-width=".95">${[...cells.values()].map(([i, j, c]) => svg`<circle cx=${(291 + i * DX).toFixed(2)} cy=${(134 + j * DY + (i % 2) * DY / 2).toFixed(2)} r="2.650" fill=${COL[c]}/>`)}</g>`;

/* ---------- toolbar content ---------- */
const ROW1 = "grip new open save layout manager styles | hand! panto zin zout zfull zsel zlay z11~ zlast znext~ newmap bmnew bm clock refresh | ident table abacus gear sigma ruler v tip action~ v~ text v | hist1~ hist2~ hist3~".split(" ");
const ROW2 = "grip pencils~ pencil savee~ poly~ vertex~ v~ multi~ trash~ cut~ copy~ paste~ undo~ redo~ | lab chart / labpin labred / g1~ g2~ g3~ g4~ g5~ | | select v form v desel v | help | db | grass".split(" ");
const bar = (row: string[]) => row.map(k => {
  if (k === "grip") return html`<div class="slot g0"><i class="grip"></i></div>`;
  if (k === "|") return html`<div class="slot g1"><i class="grip"></i></div>`;
  if (k === "/") return html`<div class="slot sp"><i></i></div>`;
  const dis = k.endsWith("~"), on = k.endsWith("!"), n = k.replace(/[~!]/, "");
  if (n === "v") return html`<div class="slot av ${dis ? "dis" : ""}">${tri}</div>`;
  return html`<div class="slot tb ${dis ? "dis" : ""} ${on ? "on" : ""}">${ic(n)}${n === "pencils" ? html`<i class="tri mini"></i>` : ""}</div>`;
});
const chk = (on = true) => html`<i class="chk">${on ? html`<svg width="11" height="11" viewBox="0 0 11 11"><path d="M1.500 5.500L4 8.800L9.300 1.500" fill="none" stroke="#000" stroke-width="2"/></svg>` : ""}</i>`;
const winbtn = html`<svg class="wb" width="26" height="12" viewBox="0 0 26 12"><g fill="#eee" stroke="#777"><rect x=".5" y=".5" width="10.500" height="10.500" rx="2"/><rect x="14.500" y=".5" width="10.500" height="10.500" rx="2"/></g><path d="M5 2.500H9V6.500H5ZM3 5V9H7V6.500" fill="none" stroke="#555"/><path d="M17 3L22.500 8.500M22.500 3L17 8.500" stroke="#444" stroke-width="1.800"/></svg>`;
const spinArr = html`<span class="spin"><i class="ar u"></i><i class="ar d"></i></span>`;

@customElement("app-root")
export class AppRoot extends LitElement {
  static styles = css`
    :host{display:block;width:1245px;height:728px;overflow:hidden;position:relative;font:12px "Open Sans","Noto Sans",sans-serif;color:#000}
    *{box-sizing:border-box}
    .t{white-space:pre;display:inline-block;flex:none}
    u{text-underline-offset:1.500px;text-decoration-thickness:1px}
    .ul{text-decoration:underline;text-underline-offset:1px;text-decoration-thickness:1px}
    .ic{flex:none;display:block;overflow:visible}
    svg text{font-family:"DejaVu Sans","Liberation Sans",sans-serif}
    .win{height:728px;border:1px solid #ababab;border-top-color:#b8b8b8;background:#fcfcfc;padding:0 6px 0 6px;display:flex;flex-direction:column}
    .title{height:29px;display:flex;align-items:center;justify-content:space-between;margin:0 0 0 3px;flex:none}
    .title .cap{font-size:15px;color:#2b2b2b;flex:1;display:flex;padding:0 0 2px 512px}
    .ctl{display:flex;align-self:flex-start;height:20px}
    .ctl .m{width:27px}.ctl .m svg{display:block}
    .x{width:45px;height:20px;background:#c75050;display:grid;place-items:center}
    .body{flex:none;height:692px;border:1px solid #c9c9c9;border-bottom:0;background:#f0f0f0;display:flex;flex-direction:column}
    .menu{height:20px;border-bottom:1px solid #ccc;display:flex;align-items:center;gap:14.150px;padding-left:10px;background:#f0f0f0;flex:none}
    .tbar{height:39px;border-bottom:1px solid #b5b5b5;background:linear-gradient(#fbfbfb,#ececec);display:flex;align-items:center;flex:none}
    .tbar.b{height:40px;border-bottom-width:2px}
    .slot{flex:none;display:flex;align-items:center;justify-content:center;height:31px}
    .tb{width:33px;position:relative}.g0{width:12.500px;padding-left:1px}.g1{width:16px;padding-left:5px}.sp{width:7px;padding-right:4px}
    .sp i{width:1px;height:19px;background:#ccc}
    .av{width:12px}
    .dis{filter:grayscale(.75);opacity:.38}
    .on{background:#dcdcdc;border:1px solid #999;border-radius:3px;width:32px;margin-right:1px}
    .grip{width:5px;height:17px;background-image:radial-gradient(circle at 1px 1px,#bbb .6px,transparent .9px);background-size:2.700px 2.900px}
    .tri{width:0;height:0;border:4px solid transparent;border-top:4px solid #555;border-bottom:0;flex:none}
    .mini{position:absolute;right:2px;bottom:2px;border-width:3px 3px 0}
    .more{margin-left:auto;padding-right:5px;font-weight:700;font-size:14px}
    .main{height:562px;display:flex;flex:none}
    .left{width:52px;background:linear-gradient(90deg,#fdfdfd,#eee);border-right:1px solid #b5b5b5;padding-top:5px;display:flex;flex-direction:column}
    .left .lg{width:17px;height:5px;margin:0 0 1px 18px;background-image:radial-gradient(circle at 1px 1px,#bbb .6px,transparent .9px);background-size:2.900px 2.700px}
    .left .r{height:32px;display:flex;align-items:center;padding-left:8px;gap:6px}
    .layers{width:215px;margin-right:6px;display:flex;flex-direction:column}
    .ph{height:19px;display:flex;align-items:center;justify-content:space-between;padding:0 1px 0 4px;font-size:15px;flex:none;line-height:19px}
    .wb{margin-top:-2px}
    .lt{height:30px;display:flex;align-items:center;padding:0 0 2px 4px;flex:none}
    .lt div{width:28px;display:grid;place-items:center;height:23px}
    .lt .pr{width:24px;background:#dcdcdc;border:1px solid #999;border-radius:3px;margin-right:-1px}
    .lt .s{width:12px}
    .tree{flex:1;background:#fff;border:1px solid #b5b5b5}
    .tr{height:18px;display:flex;align-items:center}
    .tr.a{background:#efefef;padding-left:6px}
    .tr.c{padding-left:43px}.tr.b0{padding-left:23px}
    .chk{width:14px;height:14px;border:1px solid #999;background:#fff;display:grid;place-items:center;flex:none}
    .sw{width:18px;height:18px;border:1px solid #22302e;flex:none}
    .bold{font-weight:700}
    .tabs{height:25px;display:flex;border-top:0;flex:none;padding-top:2px}
    .tabs .tab{background:#dedede;border:1px solid #a5a5a5;border-radius:0 0 3px 3px;height:21px;display:flex;align-items:center;padding:0 11px 0 10px}
    .tabs .tab.cur{background:#fbfbfb;border-top:0;height:23px;margin-left:-1px;padding:2px 11px 0}
    .tabs .rest{flex:1;border-top:1px solid #b5b5b5}
    .tah,.tabs,.form,.stat,.combo{font-family:"DejaVu Sans Condensed","DejaVu Sans",sans-serif;font-stretch:condensed;font-size:11px}
    .map{width:510px;border:1px solid #b5b5b5;border-top:0;display:block;overflow:hidden;height:562px;flex:none}
    .map svg{display:block}
    .sty{width:441px;margin-left:6px;display:flex;flex-direction:column;border-right:0}
    .sty .ph{padding-right:2px}
    .combo{height:24px;border:1px solid #999;border-radius:3px;background:linear-gradient(#fff,#eee);display:flex;align-items:center;flex:none}
    .sbody{height:488px;display:flex;margin:1px 0 0 3px;flex:none}
    .side{width:38px;display:flex;flex-direction:column}
    .side .d{flex:1;background:#5c5c5c}.side .q{height:32px;display:grid;place-items:center;padding-right:6px}
    .side .f{height:37px;display:grid;place-items:center;padding-top:5px}
    .btn{border:1px solid #aaa;border-radius:3px;background:linear-gradient(#fff,#f1f1f1);display:grid;place-items:center;flex:none}
    .inner{width:395px;padding-left:3px;display:flex;flex-direction:column}
    .sym{display:flex;height:136px;margin-top:5px;padding-left:20px}
    .pv{width:61px;height:61px;border:1px solid #222;background:#5fa467;margin-top:38px;border-radius:1px}
    .st{width:205px;height:136px;border:1px solid #b5b5b5;background:#fff;margin:0 6px 0 26px;font-size:12px}
    .st .tr.s{background:#efefef;padding-left:43px}
    .bg{display:grid;grid-template-columns:28px 28px;grid-auto-rows:24px;gap:5px 6px;align-content:start;padding-top:1px}
    .bg .o{opacity:.6}
    .sb{width:13px;border-left:1px solid #c5c5c5;height:100%;background:#f5f5f5;display:flex;flex-direction:column;align-items:center}
    .ar{width:0;height:0;border:4px solid transparent;display:block;flex:none}
    .ar.u{border-top:0;border-bottom:4px solid #555}.ar.d{border-bottom:0;border-top:4px solid #555}
    .form{display:flex;flex:1;min-height:0}
    .rows{width:364px;display:flex;flex-direction:column}
    .fr{height:32px;display:flex;align-items:center;padding-left:9px;flex:none}
    .fr .l{width:67px;flex:none}
    .col{width:221px;height:22px;border:1px solid #aaa;border-radius:3px;background:linear-gradient(#fff,#f0f0f0);padding:2px 4px 3px 4px;display:flex}
    .col i{flex:1;border-radius:3px}
    .dn{width:12px;height:22px;border:1px solid #aaa;border-radius:3px;background:linear-gradient(#fff,#f0f0f0);display:grid;place-items:center;margin-left:1px}
    .dn .tri,.combo .tri{border-left-width:4px;border-right-width:4px}
    .inp{height:20px;border:1px solid #aaa;border-radius:3px;background:#fff;display:flex;align-items:center;padding-left:4px}
    .spin{width:15px;height:100%;border-left:1px solid #bbb;background:linear-gradient(#fff,#f0f0f0);display:flex;flex-direction:column;align-items:center;justify-content:center;gap:3px;margin-left:auto;border-radius:0 3px 3px 0;flex:none}
    .mm{height:22px;border:1px solid #aaa;border-radius:3px 0 0 3px;background:linear-gradient(#fff,#f0f0f0);display:flex;align-items:center;padding-left:3px;width:60px}
    .ddb{margin-left:6px;width:30px;height:27px;display:grid;place-items:center;border:1px solid transparent}
    .ddb.h{border-color:#4f9be0}
    .stat{height:28px;display:flex;align-items:center;flex:none;color:#111}
    .pop{position:absolute;left:1097px;top:467px;width:160px;height:270px;background:#fff;border:1px solid #8c8c8c;font-size:12px}
    .pop .mi{height:23px;display:flex;align-items:center;padding-left:6px}
    .pop .mi:first-child{height:22px}
    .pop .mi .chk{margin-right:7px;border-color:#bbb}.pop .no{padding-left:27px}
    .pop .hd{color:#757575;font-style:italic}.pop .hl{background:#3399ff;color:#fff}
    .pop .se{height:2px;border-top:1px solid #bbb;margin-left:4px}
    .ov{position:absolute;left:0;top:0;pointer-events:none}
    .edge{height:6px;border-top:1px solid #ccc;background:#fcfcfc;margin:0 -1px}
  `;
  async firstUpdated() {
    await document.fonts.ready;
    this.renderRoot.querySelectorAll<HTMLElement>(".t").forEach(e => {
      const w = Number(e.dataset.w);
      if (w) e.style.letterSpacing = ((w - e.getBoundingClientRect().width) / (e.textContent || " ").length).toFixed(3) + "px";
    });
  }
  render() {
    const cls: [string, string, number][] = [["#fde725", "1 - 11", 28], ["#5dc863", "11 - 36", 35], ["#21908c", "36 - 83", 35], ["#3b528b", "83 - 176", 41], ["#440154", "176 - 295", 47]];
    const pop: [string, number, string, boolean?][] = [["Data defined override", 115, "hd"], ["Description...", 69, ""], ["-", 0, ""], ["Store Data in the Project", 128, "", true], ["Attribute Field", 75, "hd"], ["Field type: string", 87, "", true], ["-", 0, ""], ["Project Color", 66, "hd"], ["Color", 29, "", true], ["-", 0, ""], ["Expression", 54, "hd"], ["Variable", 42, "", true], ["Edit...", 29, "hl"], ["Paste", 28, ""], ["-", 0, ""]];
    return html`
    <div class="win">
      <div class="title">${ic("logo", 16)}<div class="cap">${t("*maritime_piracy — QGIS", 167)}</div>
        <div class="ctl">
          <div class="m"><svg width="12" height="20"><path d="M1 13.500H9" stroke="#222" stroke-width="2.400"/></svg></div>
          <div class="m" style="width:19px"><svg width="12" height="20"><path d="M-.5 7.500H8.500V14.500H-.5Z M-.5 8.500H8.500" transform="translate(1)" fill="none" stroke="#222" stroke-width="1.200"/></svg></div>
          <div class="x"><svg width="8" height="8" viewBox="0 0 8 8"><path d="M1 1L7 7M7 1L1 7" stroke="#fff" stroke-width="1.700"/></svg></div>
        </div></div>
      <div class="body">
        <div class="menu">${([["Pro&ject", 37], ["&Edit", 20], ["&View", 24.5], ["&Layer", 28], ["&Settings", 42], ["&Plugins", 39], ["Vect&or", 34], ["&Raster", 32], ["&Database", 48], ["&Web", 23.5], ["&Mesh", 28.5], ["Pro&cessing", 57], ["&Help", 25]] as [string, number][]).map(([s, w]) => t(s, w))}</div>
        <div class="tbar">${bar(ROW1)}<span class="more">»</span></div>
        <div class="tbar b">${bar(ROW2)}</div>
        <div class="main">
          <div class="left"><i class="lg"></i>${["addv", "raster", "mesh", "comma", "feather", "vbox", "db2", "globe1", "globe2", "globe3", "newv"].map((n, i) => html`<div class="r">${ic(n)}${[6, 7, 9, 10].includes(i) ? tri : ""}</div>`)}</div>
          <div class="layers">
            <div class="ph">${t("Layers", 41)}${winbtn}</div>
            <div class="lt"><div class="pr">${ic("style", 16)}</div><div>${ic("addgrp", 16)}</div><div style="width:24px">${ic("eye", 17)}</div><div style="width:26px">${ic("filter", 15)}</div><div style="width:24px">${ic("eps", 16)}</div><div class="s">${tri}</div><div style="width:25px">${ic("expand", 15)}</div><div style="width:25px">${ic("collapse", 15)}</div><span class="more" style="padding-right:4px">»</span></div>
            <div class="tree">
              <div class="tr a">${tri}<span style="width:9px"></span>${chk()}<span style="width:5px"></span>${ic("blob", 17)}<span style="width:5px"></span>${t("Aggregated", 66, "bold ul")}<span style="flex:1"></span><span class="btn" style="width:16px;height:16px;border-color:#ddd;margin-right:5px">${ic("mem", 14)}</span></div>
              ${cls.map(([c, s, w]) => html`<div class="tr c">${chk()}<span style="width:6px"></span><i class="sw" style="background:${c}"></i><span style="width:6px"></span>${t(s, w)}</div>`)}
              <div class="tr b0">${chk()}<span style="width:12px"></span><svg width="4" height="4"><circle cx="2" cy="2" r="1.800" fill="#4a7a45"/></svg><span style="width:12px"></span>${t("ASAM_events", 77, "bold")}</div>
              <div class="tr b0">${chk()}<span style="width:6px"></span><i class="sw" style="background:#61131f;width:16px;height:16px"></i><span style="width:6px"></span>${t("ne_10m_land", 72, "bold")}</div>
            </div>
            <div class="tabs"><div class="tab">${t("Browser", 40)}</div><div class="tab cur">${t("Layers", 33)}</div><div class="rest"></div></div>
          </div>
          <div class="map"><svg width="508" height="561" viewBox="282 130 508 561">${mapView()}</svg></div>
          <div class="sty">
            <div class="ph">${t("Layer Styling", 83)}${winbtn}</div>
            <div class="combo" style="margin:2px 4px 0 3px;padding:0 7px 0 5px">${ic("blobg", 17)}<span style="width:2px"></span>${t("Aggregated", 57)}<span style="flex:1"></span>${tri}</div>
            <div class="sbody">
              <div class="side"><div class="f">${ic("brushbig", 23)}</div><div class="d">${["lab", "halo", "cube", "tree3", "hist4"].map(n => html`<div class="q">${ic(n, 23)}</div>`)}</div></div>
              <div class="inner">
                <div style="display:flex;align-items:center;height:24px;margin-top:5px;gap:8px"><span class="btn" style="width:24px;height:24px">${ic("back", 18)}</span><span class="tah">${t("Symbol Settings", 76)}</span></div>
                <div class="sym"><div class="pv"></div>
                  <div class="st"><div class="tr" style="padding-left:6px">${tri}<span style="width:9px"></span><i class="sw" style="background:#5fa467;width:16px;height:16px"></i><span style="width:6px"></span>${t("Fill", 15, "bold")}</div>
                    <div class="tr s"><i class="sw" style="background:#4f9f96;border-color:#35746f;width:16px;height:16px"></i><span style="width:6px"></span>${t("Simple fill", 52)}</div></div>
                  <div class="bg">${["addb", "up", "minus", "down", "dup", "lock"].map(n => html`<span class="btn ${["up", "minus", "down"].includes(n) ? "o" : ""}">${ic(n, 20)}</span>`)}</div>
                  <div class="sb" style="height:490px;padding-top:4px"><i class="ar u"></i><span style="width:12px;border-bottom:1px solid #bbb;height:6px"></span></div>
                </div>
                <div class="form" style="border-top:1px solid #aaa;margin-top:6px;width:379px">
                  <div class="rows">
                    <div style="height:12px;width:268px;margin:0 0 9px 87px;border-bottom:1px solid #aaa;border-radius:3px"></div>
                    <div class="fr"><span class="l">${t("Fill color", 38)}</span><span class="col"><i style="background:#5fa467"></i></span><span class="dn">${tri}</span><span class="ddb">${ic("dd", 22)}</span></div>
                    <div class="fr"><span class="l">${t("Fill style", 38)}</span><span class="combo" style="width:234px;padding:0 7px 0 5px"><i style="width:32px;height:16px;background:#636363;margin-right:2px"></i>${t("Solid", 22)}<span style="flex:1"></span>${tri}</span><span class="ddb">${ic("dd", 22)}</span></div>
                    <div class="fr"><span class="l">${t("Stroke color", 57)}</span><span class="col"><i style="background:#232323"></i></span><span class="dn">${tri}</span><span class="ddb h">${ic("dd", 22)}</span></div>
                    <div class="fr"><span class="l">${t("Stroke width", 60)}</span><span class="inp" style="width:125px">${t("0.260000", 46)}<span style="flex:1"></span><svg width="13" height="10" viewBox="0 0 13 10"><path d="M0 5L4 0H13V10H4Z" fill="#888"/><path d="M5.500 2.500L10 7.500M10 2.500L5.500 7.500" stroke="#fff" stroke-width="1.300"/></svg><span style="width:11px"></span><span class="spin" style="margin-left:0"><i class="ar u"></i><i class="ar d"></i></span></span><span class="mm" style="margin-left:6px">${t("Millimeters", 52)}</span></div>
                    <div class="fr"><span class="l">${t("Stroke style", 57)}</span><span class="combo" style="width:234px;padding-left:5px"><i style="width:32px;height:2px;background:#000;margin-right:2px"></i>${t("Solid Line", 44)}</span></div>
                    <div class="fr"><span class="l">${t("Join style", 45)}</span><span class="combo" style="width:234px;padding-left:4px">${ic("bevel", 16)}<span style="width:3px"></span>${t("Bevel", 27)}</span></div>
                    <div style="display:flex;align-items:center;padding:0 0 0 9px;height:58px"><span style="width:67px">${t("Offset", 31)}</span>
                      <span style="display:flex;flex-direction:column;gap:8px"><span style="display:flex;align-items:center"><span style="width:12px">x</span><span class="inp" style="width:113px">${t("0.000000", 46)}${spinArr}</span></span><span style="display:flex;align-items:center"><span style="width:12px">y</span><span class="inp" style="width:113px">${t("0.000000", 46)}${spinArr}</span></span></span>
                      <span class="mm" style="margin-left:6px">${t("Millimeters", 52)}</span></div>
                    <div style="display:flex;align-items:center;height:24px;margin-top:16px;gap:6px"><span class="btn" style="width:24px;height:24px">${ic("undoO", 15)}</span><span class="btn" style="width:24px;height:24px">${ic("redoG", 15)}</span><span style="width:160px"></span>${chk()}<span style="margin-left:-2px">${t("Live update", 58)}</span></div>
                  </div>
                  <div class="sb" style="width:14px;margin-top:8px;padding-top:4px;height:290px"><i class="ar u"></i><span style="width:13px;border-bottom:1px solid #bbb;height:5px"></span><span style="width:13px;height:17px;background:#e4e4e4;border-bottom:1px solid #bbb"></span></div>
                </div>
              </div>
            </div>
            <div class="tabs" style="margin-top:3px"><div class="tab" style="width:117px;padding-left:10px">${t("Processing Toolbox", 93)}</div><div class="tab cur" style="width:86px;padding-left:10px">${t("Layer Styling", 63)}</div><div class="rest"></div></div>
          </div>
        </div>
        <div class="stat">
          <span class="inp" style="width:200px;height:22px;margin-left:4px;color:#808080;padding-left:8px">${ic("search", 13)}<span style="width:6px"></span>${t("Type to locate (Ctrl+K)", 112)}</span>
          <span style="margin-left:191px">${t("Coordinate", 53)}</span><span class="inp" style="width:95px;height:22px;margin-left:4px;padding-left:9px">${t("9892930,-3324", 75)}</span>
          <span style="margin:0 13px 0 3px">${ic("mouse", 16)}</span>${t("Scale", 25)}
          <span class="inp" style="width:81px;height:22px;margin-left:4px;padding-left:1px">${t(".:68972536", 54)}<span style="margin-left:auto;width:21px;height:100%;border-left:1px solid #aaa;display:grid;place-items:center;background:linear-gradient(#fff,#eee)">${tri}</span></span>
          <span style="margin:0 6px 0 10px">${ic("padlock", 16)}</span>${t("Magnifier", 44)}
          <span class="inp" style="width:88px;margin-left:4px">${t("100%", 29)}${spinArr}</span>
          <span style="margin-left:8px">${t("Rotation", 42)}</span><span class="inp" style="width:84px;margin-left:9px">${t("0.0 °", 25)}${spinArr}</span>
          <span style="margin:0 4px 0 6px">${chk()}</span>${t("Render", 35)}<span style="margin-left:18px">${ic("world", 14)}</span>
        </div>
        <div class="edge"></div>
      </div>
    </div>
    <div class="pop">${pop.map(([s, w, c, k]) => s === "-" ? html`<div class="se"></div>` : html`<div class="mi ${c} ${k ? "" : "no"}">${k ? chk(false) : ""}${t(s, w)}</div>`)}</div>
    <svg class="ov" width="1245" height="728" viewBox="0 0 1245 728">
      <rect x="984" y="227" width="97" height="23.500" fill="none" stroke="#f10000" stroke-width="2.600"/>
      <ellipse cx="1174.300" cy="453.800" rx="21.800" ry="18.800" fill="none" stroke="#e80000" stroke-width="2.400"/>
      <path d="M1175.500 684.500V700L1179.300 696.500L1181.800 702L1184.300 701L1181.900 695.500H1186.500Z" fill="#fff" stroke="#111" stroke-width="1"/>
    </svg>`;
  }
}
